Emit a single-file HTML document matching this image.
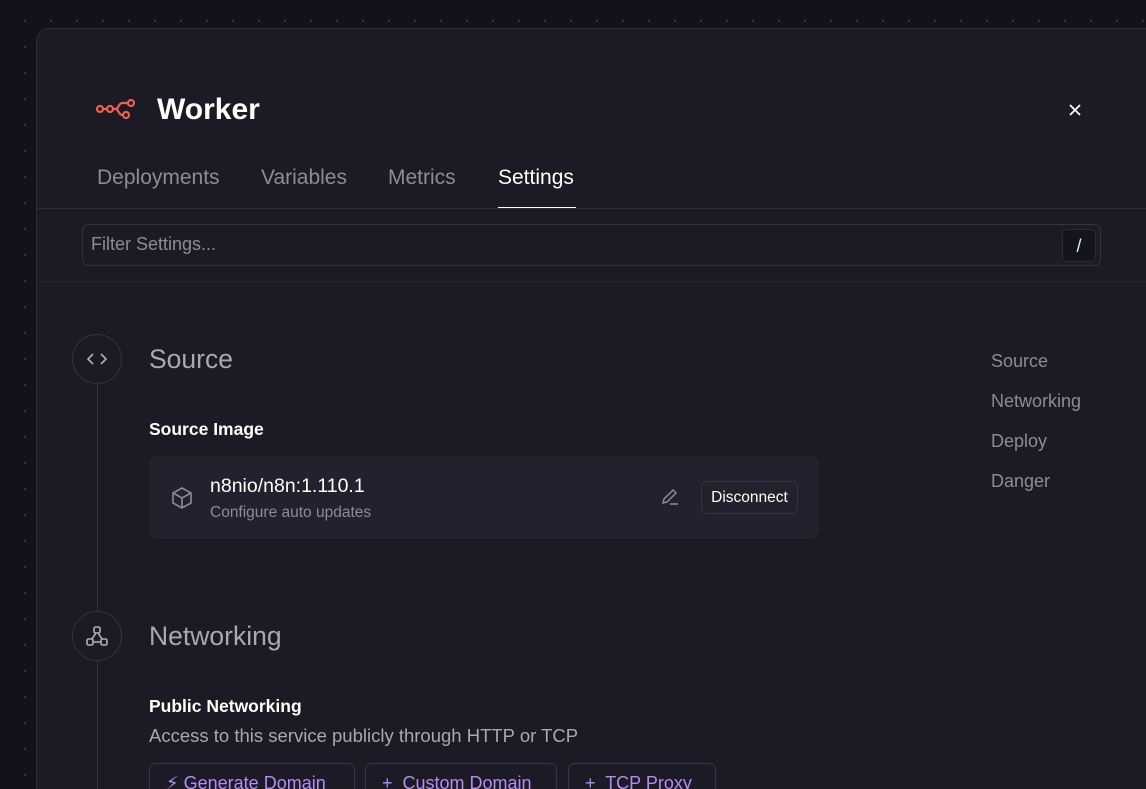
<!DOCTYPE html>
<html style="width:1146px;height:789px;overflow:hidden"><head><meta charset="utf-8"><style>
*{margin:0;padding:0;box-sizing:border-box}
body{width:1146px;height:789px;overflow:hidden;background:#13111c;font-family:"Liberation Sans",sans-serif;position:relative;
background-image:radial-gradient(circle,#3a3848 0.8px,transparent 1.2px);background-size:26px 26px;background-position:12px 8px}
.panel{position:absolute;left:36px;top:28px;width:1130px;height:800px;background:#1b1a25;border:1px solid #2e2d3a;border-radius:14px 0 0 0}
.a{position:absolute;white-space:nowrap}
.tab{position:absolute;top:166px;font-size:21px;color:#8d8b98}
.hline{position:absolute;left:37px;right:0;height:1px;background:#2e2d3a}
.circle{position:absolute;width:50px;height:50px;border:1px solid #34333f;border-radius:50%;display:flex;align-items:center;justify-content:center;background:#1b1a25}
.btn{position:absolute;top:763px;height:40px;border:1px solid #3b2f55;border-radius:6px;color:#b38cf5;font-size:18px;padding:9px 0 0 16px;white-space:nowrap}
.nav{position:absolute;left:991px;font-size:18px;color:#8d8b98}
</style></head><body>
<div class="panel"></div>
<svg class="a" style="left:96px;top:99px" width="42" height="24" viewBox="0 0 42 24" fill="none" stroke="#f0604d" stroke-width="2.2">
<circle cx="4" cy="10" r="3"/><line x1="7" y1="10" x2="11" y2="10"/><circle cx="14" cy="10" r="3"/><path d="M17 10h3c2 0 3-6 6-6h6"/><path d="M20 10c2 0 3 6 6 6h1"/><circle cx="35" cy="4" r="3"/><circle cx="30" cy="16" r="3"/></svg>
<div class="a" style="left:157px;top:93px;font-size:30px;font-weight:bold;color:#fff">Worker</div>
<svg class="a" style="left:1068px;top:103px" width="14" height="14" stroke="#fff" stroke-width="1.8"><path d="M2 2L12 12M12 2L2 12"/></svg>
<div class="tab" style="left:97px">Deployments</div>
<div class="tab" style="left:261px">Variables</div>
<div class="tab" style="left:388px">Metrics</div>
<div class="tab" style="left:498px;color:#fff">Settings</div>
<div class="a" style="left:498px;top:207px;width:78px;height:2px;background:#fff"></div>
<div class="hline" style="top:208px"></div>
<div class="a" style="left:82px;top:224px;width:1019px;height:42px;border:1px solid #33323e;border-radius:7px"></div>
<div class="a" style="left:91px;top:234px;font-size:18px;color:#8d8b98">Filter Settings...</div>
<div class="a" style="left:1062px;top:229px;width:34px;height:33px;background:#15141d;border:1px solid #2a2935;border-radius:5px;color:#cfd;font-size:18px;text-align:center;line-height:32px">/</div>
<div class="hline" style="top:281px;background:#24232e"></div>
<div class="a" style="left:97px;top:384px;width:1px;height:420px;background:#34333f"></div>
<div class="circle" style="left:72px;top:334px"><svg width="22" height="14" stroke="#b0aebb" stroke-width="1.6" fill="none"><path d="M7 2L2 7l5 5M15 2l5 5-5 5"/></svg></div>
<div class="circle" style="left:72px;top:611px"><svg width="24" height="22" stroke="#b0aebb" stroke-width="1.6" fill="none"><rect x="9" y="2" width="6" height="6" rx="1.5"/><rect x="2" y="14" width="6" height="6" rx="1.5"/><rect x="16" y="14" width="6" height="6" rx="1.5"/><path d="M11 8l-4 6M13 8l4 6M8 17h8"/></svg></div>
<div class="a" style="left:149px;top:344px;font-size:26.5px;color:#a9a7b4">Source</div>
<div class="a" style="left:149px;top:419px;font-size:17.5px;font-weight:bold;color:#fff">Source Image</div>
<div class="a" style="left:149px;top:456px;width:670px;height:83px;background:#22212d;border-radius:8px"></div>
<svg class="a" style="left:171px;top:486px" width="22" height="24" stroke="#8d8b98" stroke-width="1.6" fill="none"><path d="M11 2l9 5v10l-9 5-9-5V7z"/><path d="M2 7l9 5 9-5M11 12v10"/></svg>
<div class="a" style="left:210px;top:475px;font-size:19.5px;color:#fff">n8nio/n8n:1.110.1</div>
<div class="a" style="left:210px;top:504px;font-size:15.5px;color:#8d8b98">Configure auto updates</div>
<svg class="a" style="left:660px;top:487px" width="20" height="20" stroke="#8d8b98" stroke-width="1.5" fill="none"><path d="M3 16l1-4 9-9 3 3-9 9z"/><path d="M10 17h8"/></svg>
<div class="a" style="left:701px;top:481px;width:97px;height:33px;border:1px solid #34333f;border-radius:6px;color:#fff;font-size:15.5px;text-align:center;line-height:31px">Disconnect</div>
<div class="a" style="left:149px;top:621px;font-size:26.5px;color:#a9a7b4">Networking</div>
<div class="a" style="left:149px;top:696px;font-size:17.5px;font-weight:bold;color:#fff">Public Networking</div>
<div class="a" style="left:149px;top:725px;font-size:18.5px;color:#a9a7b4">Access to this service publicly through HTTP or TCP</div>
<div class="btn" style="left:149px;width:206px">⚡︎ Generate Domain</div>
<div class="btn" style="left:365px;width:192px">+&nbsp; Custom Domain</div>
<div class="btn" style="left:568px;width:148px">+&nbsp; TCP Proxy</div>
<div class="nav" style="top:351px">Source</div>
<div class="nav" style="top:391px">Networking</div>
<div class="nav" style="top:431px">Deploy</div>
<div class="nav" style="top:471px">Danger</div>
</body></html>
